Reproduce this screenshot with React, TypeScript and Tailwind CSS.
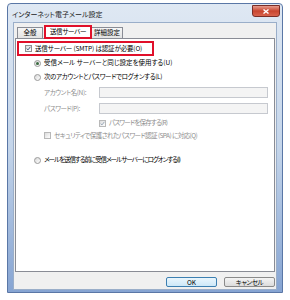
const jp = "font-['Noto_Sans_CJK_JP','Noto_Sans',sans-serif] [font-feature-settings:'palt']"

function Check({ checked, disabled }: { checked?: boolean; disabled?: boolean }) {
  return (
    <span
      className={`w-[7px] h-[7px] shrink-0 border flex items-center justify-center bg-gradient-to-br from-[#dcdcdc] to-white ${
        disabled ? 'border-[#b8b8b8]' : 'border-[#8f8f8f]'
      }`}
    >
      {checked && (
        <svg width="5" height="5" viewBox="0 0 5 5">
          <path d="M0.6 2.5 L2 3.9 L4.4 0.8" fill="none" stroke={disabled ? '#9aa8b8' : '#4a5f80'} strokeWidth="1" />
        </svg>
      )}
    </span>
  )
}

function Radio({ on }: { on?: boolean }) {
  return (
    <span className="w-[7px] h-[7px] shrink-0 rounded-full border border-[#9a9a9a] bg-gradient-to-br from-[#d8d8d8] to-white flex items-center justify-center">
      {on && <span className="w-[3px] h-[3px] rounded-full bg-[#3a6a3f]" />}
    </span>
  )
}

export default function App() {
  return (
    <div className={`w-[290px] h-[300px] bg-white pl-[7px] pt-[3px] whitespace-nowrap ${jp}`}>
      <div className="w-[276px] h-[290px] rounded-t-[4px] border border-[#5a77a6] bg-gradient-to-b from-[#dfe8f3] via-[#c4d5ea] to-[#86a4d2] flex flex-col px-[5px] pb-[2px]">
        {/* title bar */}
        <div className="h-[18px] flex items-start justify-between">
          <span className="text-[7px] leading-none text-[#1b1b1b] mt-[7px] ml-[-1px]">インターネット電子メール設定</span>
          <div className="w-[28px] h-[12px] mt-px mr-[-3px] rounded-b-[3px] border border-[#7a2d26] bg-gradient-to-b from-[#e59a8c] via-[#c8452f] to-[#d9634d] flex items-center justify-center">
            <svg width="6" height="5" viewBox="0 0 6 5">
              <path d="M0.5 0.5 L5.5 4.5 M5.5 0.5 L0.5 4.5" stroke="white" strokeWidth="1.4" />
            </svg>
          </div>
        </div>

        {/* client area */}
        <div className="flex-1 bg-[#f0f0f0] border border-[#9aaec9] flex flex-col px-px pb-[2px]">
          <div className="h-[15px] pt-[3px] pl-[2px] flex items-end text-[6.5px] text-black">
            <div className="w-[26px] mr-px h-[11px] border border-b-0 border-[#898c95] bg-gradient-to-b from-[#f6f6f6] to-[#e3e3e3] flex items-center justify-center">
              全般
            </div>
            <div className="w-[48px] h-[14px] bg-white border-2 border-[#e0102a] flex items-center justify-center -mb-px relative z-10 tracking-[-0.3px]">
              送信サーバー
            </div>
            <div className="w-[31px] h-[11px] border border-b-0 border-l-0 border-[#898c95] bg-gradient-to-b from-[#f6f6f6] to-[#e3e3e3] flex items-center justify-center">
              詳細設定
            </div>
          </div>

          <div className="h-[234px] bg-white border border-[#898c95] flex flex-col text-[6.5px] tracking-[-0.15px]">
            <div className="mt-[2px] ml-px w-[137px] h-[15px] border-2 border-[#e0102a] flex items-center gap-[3px] pl-[6px] text-black">
              <Check checked />
              <span>送信サーバー (SMTP) は認証が必要(O)</span>
            </div>

            <div className="pl-[18px] flex flex-col">
              <div className="h-[14px] flex items-center gap-[3px] text-black">
                <Radio on />
                <span className="tracking-[0px]">受信メール サーバーと同じ設定を使用する(U)</span>
              </div>
              <div className="h-[14px] flex items-center gap-[3px] text-black">
                <Radio />
                <span className="tracking-[-0.35px]">次のアカウントとパスワードでログオンする(L)</span>
              </div>
            </div>

            <div className="pl-[28px] pr-[6px] mt-[3px] flex flex-col gap-[5px] text-[#8d8d8d] tracking-[-0.4px]">
              <div className="flex items-center">
                <span className="w-[55px]">アカウント名(N):</span>
                <div className="flex-1 h-[11px] border border-[#c6c9cf] bg-[#f4f4f4]" />
              </div>
              <div className="flex items-center">
                <span className="w-[55px]">パスワード(P):</span>
                <div className="flex-1 h-[11px] border border-[#c6c9cf] bg-[#f4f4f4]" />
              </div>
            </div>

            <div className="pl-[83px] mt-[3px] h-[12px] flex items-center gap-[3px] text-[#8d8d8d]">
              <Check checked disabled />
              <span className="tracking-[-0.8px]">パスワードを保存する(R)</span>
            </div>
            <div className="pl-[28px] h-[13px] flex items-center gap-[3px] text-[#8d8d8d]">
              <Check disabled />
              <span className="tracking-[-0.55px]">セキュリティで保護されたパスワード認証 (SPA) に対応(Q)</span>
            </div>

            <div className="pl-[18px] mt-[11px] h-[14px] flex items-center gap-[3px] text-black">
              <Radio />
              <span className="tracking-[-1.05px]">メールを送信する前に受信メール サーバーにログオンする(I)</span>
            </div>
          </div>

          <div className="mt-[5px] h-[10px] flex justify-end gap-[7px]">
            <button className="w-[51px] h-[10px] rounded-[2px] border border-[#3c7fb1] bg-gradient-to-b from-[#eaf6fd] to-[#cde8f8] text-[6.5px] leading-none text-black">
              OK
            </button>
            <button className="w-[51px] h-[10px] rounded-[2px] border border-[#8a8a8a] bg-gradient-to-b from-[#f4f4f4] to-[#dcdcdc] text-[6.5px] leading-none text-black tracking-[-0.4px]">
              キャンセル
            </button>
          </div>
        </div>
      </div>
    </div>
  )
}
